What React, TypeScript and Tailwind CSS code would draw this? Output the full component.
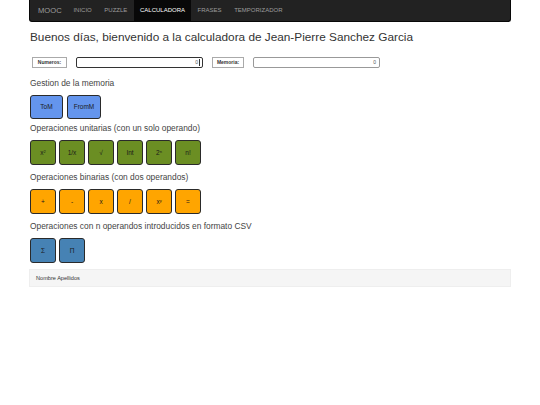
import React from "react";

const font = { fontFamily: '"Liberation Sans", Arial, sans-serif' };

function Btn({ label, color, w = "w-[26px]", h = "h-[25px]" }: { label: React.ReactNode; color: string; w?: string; h?: string }) {
  return (
    <div className={`${w} ${h} ${color} border border-[#2a2a2a] rounded-[3px] flex items-center justify-center text-[6.5px] text-[#1a1a1a]`}>
      {label}
    </div>
  );
}

export default function App() {
  const navItems = ["INICIO", "PUZZLE", "CALCULADORA", "FRASES", "TEMPORIZADOR"];
  return (
    <div className="w-[540px] h-[405px] bg-white text-[#333]" style={font}>
      <div className="ml-[29px] w-[482px]">
        <div className="h-[22px] bg-[#222] border border-t-0 border-[#080808] rounded-b-[3px] flex items-stretch pl-[8px]">
          <div className="flex items-center text-[7.6px] text-[#9d9d9d] pr-[5.5px]">MOOC</div>
          {navItems.map((n) => (
            <div
              key={n}
              className={
                n === "CALCULADORA"
                  ? "flex items-center px-[6.3px] text-[6px] bg-[#080808] text-white"
                  : "flex items-center px-[6.3px] text-[6px] text-[#9d9d9d]"
              }
            >
              {n}
            </div>
          ))}
        </div>

        <h1 className="mt-[8px] ml-[1px] text-[11.8px] leading-[15px] text-[#333]">
          Buenos días, bienvenido a la calculadora de Jean-Pierre Sanchez Garcia
        </h1>

        <div className="mt-[12px] flex items-center h-[11px]">
          <div className="ml-[3px] w-[35px] h-[11px] border border-[#aaa] flex items-center justify-center text-[5px] font-bold text-[#333]">
            Numeros:
          </div>
          <div className="ml-[9px] w-[127px] h-[11px] border border-[#333] rounded-[2px] flex items-center justify-end pr-[2px] text-[5px] text-[#555]">
            0<span className="ml-[1px] w-px h-[7px] bg-[#333]"></span>
          </div>
          <div className="ml-[9px] w-[32px] h-[11px] border border-[#aaa] flex items-center justify-center text-[5px] font-bold text-[#333]">
            Memoria:
          </div>
          <div className="ml-[9px] w-[127px] h-[11px] border border-[#999] rounded-[2px] flex items-center justify-end pr-[3px] text-[5px] text-[#555]">
            0
          </div>
        </div>

        <div className="mt-[10px] ml-[1px] text-[8.4px] leading-[10px] text-[#444]">Gestion de la memoria</div>
        <div className="mt-[7px] ml-[1px] flex gap-[4px]">
          <Btn label="ToM" color="bg-[#6495ed]" w="w-[33px]" h="h-[24px]" />
          <Btn label="FromM" color="bg-[#6495ed]" w="w-[34px]" h="h-[24px]" />
        </div>

        <div className="mt-[4px] ml-[1px] text-[8.4px] leading-[10px] text-[#444]">Operaciones unitarias (con un solo operando)</div>
        <div className="mt-[7px] ml-[1px] flex gap-[3px]">
          <Btn label={<span>x<sup className="text-[4px]">2</sup></span>} color="bg-[#6b8e23]" />
          <Btn label="1/x" color="bg-[#6b8e23]" />
          <Btn label="√" color="bg-[#6b8e23]" />
          <Btn label="Int" color="bg-[#6b8e23]" />
          <Btn label={<span>2<sup className="text-[4px]">n</sup></span>} color="bg-[#6b8e23]" />
          <Btn label="n!" color="bg-[#6b8e23]" />
        </div>

        <div className="mt-[7px] ml-[1px] text-[8.4px] leading-[10px] text-[#444]">Operaciones binarias (con dos operandos)</div>
        <div className="mt-[7px] ml-[1px] flex gap-[3px]">
          <Btn label="+" color="bg-[#ffa500]" />
          <Btn label="-" color="bg-[#ffa500]" />
          <Btn label="x" color="bg-[#ffa500]" />
          <Btn label="/" color="bg-[#ffa500]" />
          <Btn label={<span>x<sup className="text-[4px]">y</sup></span>} color="bg-[#ffa500]" />
          <Btn label="=" color="bg-[#ffa500]" />
        </div>

        <div className="mt-[7px] ml-[1px] text-[8.4px] leading-[10px] text-[#444]">Operaciones con n operandos introducidos en formato CSV</div>
        <div className="mt-[7px] ml-[1px] flex gap-[3px]">
          <Btn label="Σ" color="bg-[#4682b4]" />
          <Btn label="Π" color="bg-[#4682b4]" />
        </div>

        <div className="mt-[6px] h-[18px] bg-[#f5f5f5] border border-[#eeeeee] flex items-center pl-[6px] text-[5.6px] text-[#333]">
          Nombre Apellidos
        </div>
      </div>
    </div>
  );
}
